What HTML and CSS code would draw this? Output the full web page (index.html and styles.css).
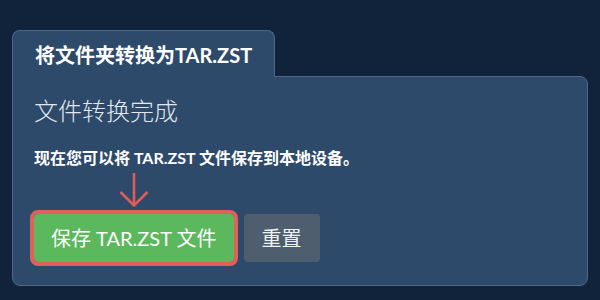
FILE: index.html
```html
<!DOCTYPE html>
<html lang="zh-CN">
<head>
    <meta charset="UTF-8">
    <meta name="viewport" content="width=device-width, initial-scale=1.0">
    <title>将文件夹转换为TAR.ZST</title>
    <link rel="stylesheet" href="styles.css">
</head>
<body>
    <div class="card">
        <div class="tab">将文件夹转换为TAR.ZST</div>
        <div class="panel">
            <h2 class="done-title">文件转换完成</h2>
            <p class="done-text">现在您可以将 TAR.ZST 文件保存到本地设备。</p>
            <div class="actions">
                <div class="save-wrap">
                    <svg class="arrow" width="32" height="36" viewBox="0 0 32 36">
                        <path d="M16 1 V34 M2.5 20 L16 33.5 L29.5 20" fill="none" stroke="#e05c5a" stroke-width="2.6"/>
                    </svg>
                    <button class="btn btn-save">保存 TAR.ZST 文件</button>
                </div>
                <button class="btn btn-reset">重置</button>
            </div>
        </div>
    </div>
</body>
</html>
```

FILE: styles.css
```css
:root {
    --bg: #11233a;
    --panel: #2d4a6b;
    --edge: #4d6888;
}

body {
    margin: 0;
    padding: 30px 12px 0;
    background: var(--bg);
    color: #fff;
    font-family: Lato, "Noto Sans CJK SC", sans-serif;
}

.card {
    display: flex;
    flex-direction: column;
    align-items: flex-start;
}

.tab {
    position: relative;
    z-index: 1;
    margin-bottom: -1px;
    padding: 12px 23px 9px 22px;
    width: 216px;
    background: var(--panel);
    border: 1px solid var(--edge);
    border-bottom: none;
    border-radius: 8px 8px 0 0;
    font-size: 20px;
    font-weight: 700;
    line-height: 25px;
    white-space: nowrap;
}

.panel {
    align-self: stretch;
    background: var(--panel);
    border: 1px solid var(--edge);
    border-radius: 0 8px 8px 8px;
    padding: 19px 21px 23px;
}

.done-title {
    margin: 0;
    font-size: 24px;
    font-weight: 300;
    line-height: 30px;
    color: #e1e7ee;
}

.done-text {
    margin: 20px 0 0;
    font-size: 16px;
    font-weight: 700;
    line-height: 24px;
}

.actions {
    display: flex;
    align-items: flex-end;
    gap: 10px;
}

.save-wrap {
    display: flex;
    flex-direction: column;
    align-items: center;
}

.arrow {
    display: block;
    margin: 2px 0 6px;
}

.btn {
    border: none;
    border-radius: 4px;
    padding: 12px 17px;
    font-family: inherit;
    font-size: 20px;
    line-height: 24px;
    color: #fff;
    cursor: pointer;
}

.btn-save {
    background: #5cb85c;
    outline: 4px solid #e0605c;
}

.btn-reset {
    background: #4f5e6f;
    padding: 12px 18px;
    color: #eef1f4;
}
```
